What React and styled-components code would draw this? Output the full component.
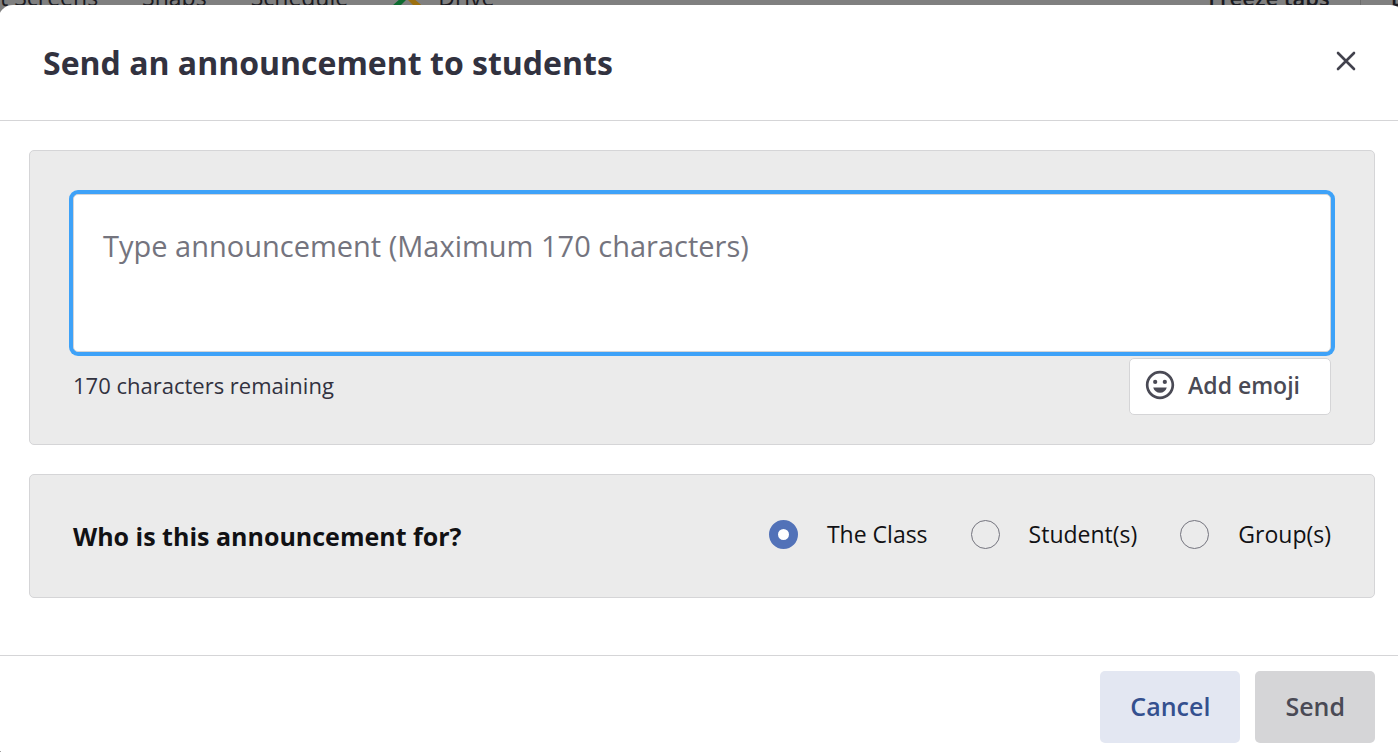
import React, { useState } from 'react';
import styled, { createGlobalStyle } from 'styled-components';

const MAX_LENGTH = 170;

const audiences = [
  { id: 'class', label: 'The Class' },
  { id: 'students', label: 'Student(s)' },
  { id: 'groups', label: 'Group(s)' },
];

const GlobalStyle = createGlobalStyle`
  * {
    box-sizing: border-box;
  }

  body {
    margin: 0;
    overflow: hidden;
    background: #808080;
    font-family: 'Open Sans', 'Noto Sans', sans-serif;
    color: #32323f;
  }

  button, textarea, input {
    font-family: inherit;
  }
`;

const Page = styled.div`
  height: 100vh;
  overflow: hidden;
`;

// scrolled mostly out of view behind the dialog
const Toolbar = styled.div`
  display: flex;
  align-items: flex-end;
  justify-content: space-between;
  height: 12px;
  margin-right: -5px;
`;

const ToolGroup = styled.div`
  display: flex;
  align-items: flex-end;
  flex-shrink: 0;
  gap: ${(props) => props.$gap};
  font-size: ${(props) => props.$size};
  font-weight: ${(props) => props.$weight || 400};
  line-height: 30px;
  color: #1b1b22;
`;

const DriveItem = styled.span`
  display: flex;
  align-items: flex-end;
  gap: 14px;
`;

const Divider = styled.span`
  width: 1px;
  height: 30px;
  background: #6c6c6c;
`;

const Dialog = styled.section`
  position: absolute; // floats over the dimmed page
  top: 5px;
  left: -2px;
  right: -7px;
  background: #fff;
  border-radius: 15px;
`;

const Header = styled.header`
  display: flex;
  align-items: center;
  justify-content: space-between;
  padding: 35px 43px 35px 45px;
  border-bottom: 1px solid #d5d5d7;
`;

const Title = styled.h1`
  margin: 0;
  font-size: 32px;
  font-weight: 700;
  line-height: 45px;
`;

const CloseButton = styled.button`
  display: flex;
  padding: 4px;
  margin-bottom: 4px;
  border: 0;
  background: none;
  color: #42424d;
`;

const Body = styled.div`
  display: flex;
  flex-direction: column;
  gap: 29px;
  padding: 29px 30px 57px 31px;
`;

const Panel = styled.div`
  padding: 43px;
  background: #ebebeb;
  border: 1px solid #d5d5d7;
  border-radius: 5px;
`;

const MessagePanel = styled(Panel)`
  padding-bottom: 29px;
`;

const AudiencePanel = styled(Panel)`
  display: flex;
  align-items: flex-start;
  justify-content: space-between;
`;

const Message = styled.textarea`
  display: block;
  width: 100%;
  height: 158px;
  padding: 31px 29px;
  border: 1px solid #d5d5d7;
  border-radius: 5px;
  outline: 0;
  box-shadow: 0 0 0 4px #3ea2f8;
  resize: none;
  font-size: 29px;
  line-height: 40px;
  color: #32323f;

  &::placeholder {
    color: #74747e;
    opacity: 1;
  }
`;

const MessageFooter = styled.div`
  display: flex;
  align-items: center;
  justify-content: space-between;
  margin-top: 6px;
`;

const Counter = styled.span`
  padding-bottom: 3px;
  font-size: 22px;
  line-height: 30px;
`;

const EmojiButton = styled.button`
  display: flex;
  align-items: center;
  gap: 11px;
  height: 57px;
  padding: 0 30px 3px 13px;
  border: 1px solid #d5d5d7;
  border-radius: 5px;
  background: #fff;
  color: #4a4a55;
  font-size: 23px;
  font-weight: 600;
`;

const Question = styled.h2`
  margin: 0;
  font-size: 25px;
  font-weight: 700;
  line-height: 36px;
  color: #111114;
`;

const Options = styled.div`
  display: flex;
  gap: 43px;
`;

const Option = styled.label`
  display: flex;
  align-items: center;
  gap: 29px;
  font-size: 23px;
  line-height: 32px;
  color: #111114;
`;

const Radio = styled.input`
  appearance: none;
  width: 29px;
  height: 29px;
  margin: 0;
  border: 1px solid #74747e;
  border-radius: 50%;

  &:checked {
    border: 9px solid #5272b8;
    background: #fff;
  }
`;

const Footer = styled.footer`
  display: flex;
  justify-content: flex-end;
  gap: 15px;
  padding: 15px 30px;
  border-top: 1px solid #d5d5d7;
`;

const ActionButton = styled.button`
  height: 72px;
  padding: 0 30px 2px;
  border: 0;
  border-radius: 5px;
  font-size: 25px;
  font-weight: 600;
  color: ${(props) => (props.$primary ? '#4a4a55' : '#34508f')};
  background: ${(props) => (props.$primary ? '#d5d5d7' : '#e3e7f2')};
`;

const DriveIcon = () => (
  <svg width="32" height="30" viewBox="5 -4 32 30" aria-hidden="true">
    <path d="M14 12h7L4 29h-9z" fill="#0d6b30" />
    <path d="M19 12h7l20 17h-10z" fill="#9c700f" />
  </svg>
);

const CloseIcon = () => (
  <svg width="24" height="24" viewBox="0 0 24 24" fill="none" aria-hidden="true">
    <path d="M4 4 20 20M20 4 4 20" stroke="currentColor" strokeWidth="2.6" strokeLinecap="round" />
  </svg>
);

const SmileIcon = () => (
  <svg width="34" height="34" viewBox="0 0 24 24" fill="currentColor" aria-hidden="true">
    <path d="M11.99 2C6.47 2 2 6.48 2 12s4.47 10 9.99 10C17.52 22 22 17.52 22 12S17.52 2 11.99 2zM12 20.1a8.1 8.1 0 1 1 0-16.2 8.1 8.1 0 0 1 0 16.2z" />
    <circle cx="8.6" cy="9.8" r="1.5" />
    <circle cx="15.4" cy="9.8" r="1.5" />
    <path d="M7.2 13.8h9.6c-.6 2.3-2.5 3.7-4.8 3.7s-4.2-1.4-4.8-3.7z" />
  </svg>
);

function App() {
  const [message, setMessage] = useState('');
  const [audience, setAudience] = useState('class');

  return (
    <Page>
      <GlobalStyle />
      <Toolbar>
        <ToolGroup $gap="44px" $size="23px">
          <span>t Screens</span>
          <span>Snaps</span>
          <span>Schedule</span>
          <DriveItem>
            <DriveIcon />
            Drive
          </DriveItem>
        </ToolGroup>
        <ToolGroup $gap="30px" $size="22px" $weight={600}>
          <span>Freeze taps</span>
          <Divider />
          <span>E</span>
        </ToolGroup>
      </Toolbar>

      <Dialog role="dialog" aria-labelledby="dialog-title">
        <Header>
          <Title id="dialog-title">Send an announcement to students</Title>
          <CloseButton type="button" aria-label="Close">
            <CloseIcon />
          </CloseButton>
        </Header>

        <Body>
          <MessagePanel>
            <Message
              aria-label="Announcement"
              placeholder="Type announcement (Maximum 170 characters)"
              maxLength={MAX_LENGTH}
              value={message}
              onChange={(e) => setMessage(e.target.value)}
            />
            <MessageFooter>
              <Counter>{MAX_LENGTH - message.length} characters remaining</Counter>
              <EmojiButton type="button">
                <SmileIcon />
                Add emoji
              </EmojiButton>
            </MessageFooter>
          </MessagePanel>

          <AudiencePanel>
            <Question id="audience-question">Who is this announcement for?</Question>
            <Options role="radiogroup" aria-labelledby="audience-question">
              {audiences.map(({ id, label }) => (
                <Option key={id}>
                  <Radio
                    type="radio"
                    name="audience"
                    checked={audience === id}
                    onChange={() => setAudience(id)}
                  />
                  {label}
                </Option>
              ))}
            </Options>
          </AudiencePanel>
        </Body>

        <Footer>
          <ActionButton type="button">Cancel</ActionButton>
          <ActionButton type="button" $primary disabled={!message}>Send</ActionButton>
        </Footer>
      </Dialog>
    </Page>
  );
}

export default App;
